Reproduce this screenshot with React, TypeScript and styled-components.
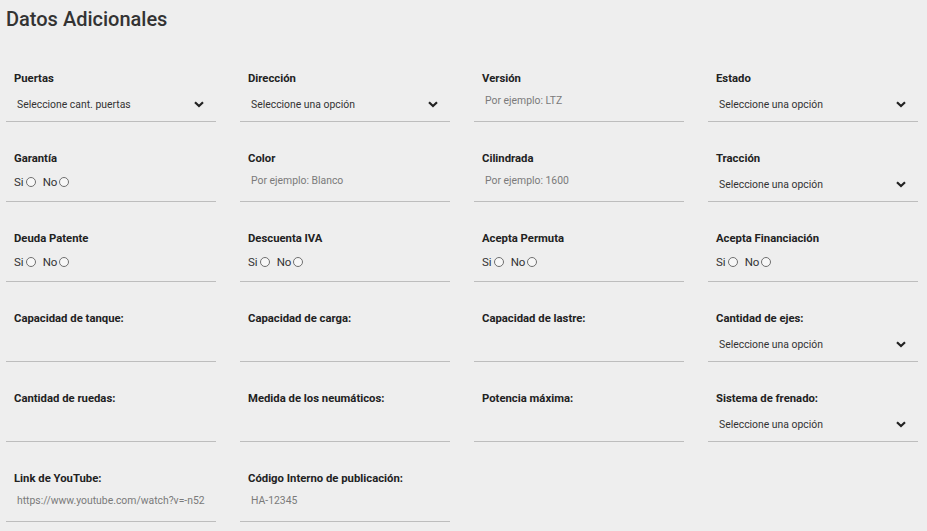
import React from "react";
import styled, { createGlobalStyle } from "styled-components";

const Global = createGlobalStyle`
  html, body { margin: 0; padding: 0; background: #eeeeee; }
  body { font-family: Roboto, "Liberation Sans", Arial, sans-serif; color: #333; }
`;

const Page = styled.div`
  width: 927px;
  height: 531px;
  background: #eeeeee;
  overflow: hidden;
`;

const Title = styled.h1`
  margin: 0;
  padding: 7px 0 0 6px;
  font-size: 20px;
  line-height: 24px;
  font-weight: 500;
  color: #333;
`;

const Grid = styled.div`
  display: grid;
  grid-template-columns: repeat(4, 210px);
  column-gap: 24px;
  padding: 11px 0 0 6px;
`;

const Cell = styled.div`
  height: 79px;
  border-bottom: 1px solid #bdbdbd;
  box-sizing: content-box;
  display: flex;
  flex-direction: column;
`;

const Label = styled.div`
  margin-top: 29px;
  padding-left: 8px;
  font-size: 11.3px;
  line-height: 15px;
  font-weight: 700;
  color: #222;
`;

const SelectRow = styled.div`
  margin-top: 9px;
  height: 18px;
  display: flex;
  align-items: center;
  justify-content: space-between;
  padding: 0 12px 0 11px;
  font-size: 10.4px;
  color: #333;
`;

const Placeholder = styled.div`
  margin-top: 5px;
  height: 18px;
  display: flex;
  align-items: center;
  padding-left: 11px;
  font-size: 10.4px;
  color: #7a7a7a;
`;

const RadioRow = styled.div`
  margin-top: 7px;
  height: 18px;
  display: flex;
  align-items: center;
  padding-left: 8px;
  font-size: 11.5px;
  color: #333;
`;

const RadioOpt = styled.label`
  display: flex;
  align-items: center;
  margin-right: 7px;
`;

const Circle = styled.span`
  display: inline-block;
  width: 8px;
  height: 8px;
  border: 1px solid #6f6f6f;
  border-radius: 50%;
  background: #f7f7f7;
  margin-left: 2px;
`;

const Chevron = () => (
  <svg width="10" height="7" viewBox="0 0 10 7">
    <path d="M1 1.2 L5 5 L9 1.2" fill="none" stroke="#222" strokeWidth="2.2" />
  </svg>
);

type Field =
  | { kind: "select"; label: string; text: string }
  | { kind: "input"; label: string; text: string }
  | { kind: "radio"; label: string }
  | { kind: "empty"; label: string };

const fields: Field[] = [
  { kind: "select", label: "Puertas", text: "Seleccione cant. puertas" },
  { kind: "select", label: "Dirección", text: "Seleccione una opción" },
  { kind: "input", label: "Versión", text: "Por ejemplo: LTZ" },
  { kind: "select", label: "Estado", text: "Seleccione una opción" },
  { kind: "radio", label: "Garantía" },
  { kind: "input", label: "Color", text: "Por ejemplo: Blanco" },
  { kind: "input", label: "Cilindrada", text: "Por ejemplo: 1600" },
  { kind: "select", label: "Tracción", text: "Seleccione una opción" },
  { kind: "radio", label: "Deuda Patente" },
  { kind: "radio", label: "Descuenta IVA" },
  { kind: "radio", label: "Acepta Permuta" },
  { kind: "radio", label: "Acepta Financiación" },
  { kind: "empty", label: "Capacidad de tanque:" },
  { kind: "empty", label: "Capacidad de carga:" },
  { kind: "empty", label: "Capacidad de lastre:" },
  { kind: "select", label: "Cantidad de ejes:", text: "Seleccione una opción" },
  { kind: "empty", label: "Cantidad de ruedas:" },
  { kind: "empty", label: "Medida de los neumáticos:" },
  { kind: "empty", label: "Potencia máxima:" },
  { kind: "select", label: "Sistema de frenado:", text: "Seleccione una opción" },
  { kind: "input", label: "Link de YouTube:", text: "https://www.youtube.com/watch?v=-n52" },
  { kind: "input", label: "Código Interno de publicación:", text: "HA-12345" },
];

export default function App() {
  return (
    <Page>
      <Global />
      <Title>Datos Adicionales</Title>
      <Grid>
        {fields.map((f) => (
          <Cell key={f.label}>
            <Label>{f.label}</Label>
            {f.kind === "select" && (
              <SelectRow>
                <span>{f.text}</span>
                <Chevron />
              </SelectRow>
            )}
            {f.kind === "input" && <Placeholder>{f.text}</Placeholder>}
            {f.kind === "radio" && (
              <RadioRow>
                <RadioOpt>
                  Si<Circle />
                </RadioOpt>
                <RadioOpt>
                  No<Circle />
                </RadioOpt>
              </RadioRow>
            )}
          </Cell>
        ))}
      </Grid>
    </Page>
  );
}
